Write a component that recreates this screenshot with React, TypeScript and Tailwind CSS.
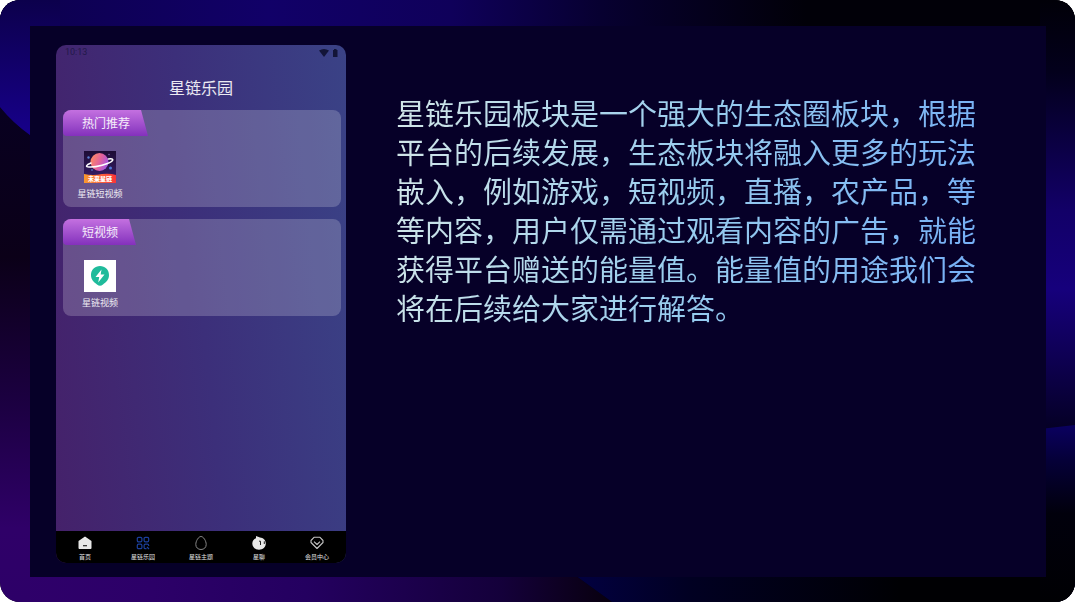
import React from 'react';

function Backdrop() {
  return (
    <svg
      className="absolute inset-0 w-full h-full"
      viewBox="0 0 1075 602"
      preserveAspectRatio="none"
      aria-hidden="true"
    >
      <defs>
        <linearGradient id="top" x1="0" y1="0" x2="1075" y2="0" gradientUnits="userSpaceOnUse">
          <stop offset="0" stopColor="#0c004c" />
          <stop offset="0.25" stopColor="#110068" />
          <stop offset="0.42" stopColor="#0f005a" />
          <stop offset="0.56" stopColor="#070030" />
          <stop offset="0.75" stopColor="#010008" />
          <stop offset="1" stopColor="#010008" />
        </linearGradient>
        <linearGradient id="topLeft" x1="0" y1="0" x2="0" y2="135" gradientUnits="userSpaceOnUse">
          <stop offset="0" stopColor="#17008a" stopOpacity="0" />
          <stop offset="1" stopColor="#17008a" />
        </linearGradient>
        <linearGradient id="left" x1="0" y1="110" x2="0" y2="602" gradientUnits="userSpaceOnUse">
          <stop offset="0" stopColor="#080020" />
          <stop offset="0.3" stopColor="#0b0018" />
          <stop offset="0.6" stopColor="#1c0042" />
          <stop offset="0.85" stopColor="#2f0068" />
          <stop offset="1" stopColor="#2d0068" />
        </linearGradient>
        <linearGradient id="bottom" x1="0" y1="0" x2="612" y2="0" gradientUnits="userSpaceOnUse">
          <stop offset="0" stopColor="#2f006a" />
          <stop offset="0.25" stopColor="#2c0068" />
          <stop offset="0.5" stopColor="#240060" />
          <stop offset="0.82" stopColor="#14003a" />
          <stop offset="1" stopColor="#08000e" />
        </linearGradient>
        <linearGradient id="bottomRight" x1="578" y1="0" x2="900" y2="0" gradientUnits="userSpaceOnUse">
          <stop offset="0" stopColor="#020040" />
          <stop offset="0.35" stopColor="#010022" />
          <stop offset="1" stopColor="#000003" />
        </linearGradient>
        <linearGradient id="right" x1="0" y1="0" x2="0" y2="602" gradientUnits="userSpaceOnUse">
          <stop offset="0" stopColor="#010008" />
          <stop offset="0.12" stopColor="#03001c" />
          <stop offset="0.35" stopColor="#120068" />
          <stop offset="0.48" stopColor="#16007c" />
          <stop offset="0.58" stopColor="#0f0058" />
          <stop offset="0.71" stopColor="#050026" />
          <stop offset="1" stopColor="#050026" />
        </linearGradient>
        <linearGradient id="rightLow" x1="0" y1="425" x2="0" y2="602" gradientUnits="userSpaceOnUse">
          <stop offset="0" stopColor="#0a0060" />
          <stop offset="0.2" stopColor="#050038" />
          <stop offset="0.5" stopColor="#01000c" />
          <stop offset="1" stopColor="#000003" />
        </linearGradient>
      </defs>
      <rect width="1075" height="602" fill="#000003" />
      <rect width="1075" height="60" fill="url(#top)" />
      <rect width="60" height="602" fill="url(#left)" />
      <path d="M0 0H60V160L30 135Q13 123 0 107Z" fill="#0c004c" />
      <path d="M0 0H60V160L30 135Q13 123 0 107Z" fill="url(#topLeft)" />
      <path d="M30 560H554L612 602H30Z" fill="url(#bottom)" />
      <path d="M554 560H1075V602H612Z" fill="url(#bottomRight)" />
      <rect x="1040" width="35" height="602" fill="url(#right)" />
      <path d="M1040 429L1075 425V602H1040Z" fill="url(#rightLow)" />
    </svg>
  );
}

function PlanetIcon() {
  return (
    <svg className="w-8 h-8" viewBox="0 0 32 32" aria-hidden="true">
      <defs>
        <linearGradient id="sky" x1="0" y1="0" x2="0" y2="1">
          <stop offset="0" stopColor="#1d0c34" />
          <stop offset="1" stopColor="#3c2272" />
        </linearGradient>
        <linearGradient id="planet" x1="0" y1="0.3" x2="1" y2="0.7">
          <stop offset="0" stopColor="#ff8b62" />
          <stop offset="0.5" stopColor="#e2619c" />
          <stop offset="1" stopColor="#9a55ec" />
        </linearGradient>
        <linearGradient id="ribbon" x1="0" y1="0" x2="1" y2="0">
          <stop offset="0" stopColor="#f99a2e" />
          <stop offset="0.6" stopColor="#fb5a3c" />
          <stop offset="1" stopColor="#fa3438" />
        </linearGradient>
      </defs>
      <rect width="32" height="32" fill="url(#sky)" />
      <circle cx="15.5" cy="11" r="9" fill="url(#planet)" />
      <path
        d="M7 12C2 14 1 16 5 16C11 16.5 26 13 28.5 9.5C29.5 8 27.500 7.500 24.500 8"
        fill="none"
        stroke="#fff"
        strokeWidth="1.5"
        strokeLinecap="round"
      />
      <circle cx="4.5" cy="6.5" r="1.2" fill="#5a7fd0" />
      <circle cx="26.5" cy="17" r="1.5" fill="#4f78d8" />
      <circle cx="8" cy="19" r="1" fill="#5060b0" />
      <circle cx="25" cy="3.5" r="0.7" fill="#8a6ac0" />
      <path d="M0 23Q9 25 18 23Q26 22 32 24V32H0Z" fill="url(#ribbon)" />
      <text
        x="16"
        y="30"
        textAnchor="middle"
        fontSize="6"
        fontWeight="900"
        fill="#fff"
        fontFamily="'Noto Sans CJK SC', sans-serif"
      >
        未来星链
      </text>
    </svg>
  );
}

function BoltIcon() {
  return (
    <svg className="w-8 h-8" viewBox="0 0 32 32" aria-hidden="true">
      <rect width="32" height="32" fill="#fff" />
      <path
        d="M16 6C21 6 25 9.5 25 15C25 20 22 22 19 24.5Q16 27 13 24.5C10 22 7 20 7 15C7 9.5 11 6 16 6Z"
        fill="#1fbb9b"
      />
      <path d="M17.5 9.5L11.5 17H15.2L14.2 22.5L20.5 14.5H16.7Z" fill="#fff" />
    </svg>
  );
}

const navItems = [
  {
    label: '首页',
    icon: <path d="M7 .5L13.500 5V12Q13.500 13 12.500 13H1.500Q.5 13 .5 12V5ZM5 9.200V10.200H9V9.200Z" fill="#e8e8e8" fillRule="evenodd" />,
  },
  {
    label: '星链乐园',
    icon: (
      <g fill="none" stroke="#1b3f9c" strokeWidth="1.2">
        <rect x="1.3" y="1.3" width="4.6" height="4.6" rx="1.3" />
        <rect x="8.1" y="1.3" width="4.6" height="4.6" rx="1.3" />
        <rect x="1.3" y="8.1" width="4.6" height="4.6" rx="1.3" />
        <path d="M10.500 12.700H9.400Q8.100 12.700 8.100 11.400V9.400Q8.100 8.100 9.400 8.100H11.400Q12.700 8.100 12.700 9.400V10M11 11L13 13" />
      </g>
    ),
  },
  {
    label: '星链主题',
    icon: (
      <path
        d="M7 .5C9.500 .5 12.200 5 12.200 8.500C12.200 11.500 10 13.500 7 13.500C4 13.500 1.800 11.500 1.800 8.500C1.800 5 4.500 .5 7 .5Z"
        fill="none"
        stroke="#888"
        strokeWidth="1"
      />
    ),
  },
  {
    label: '星聊',
    icon: (
      <>
        <path d="M4 0L8 1.500C11 1.700 13.800 4 13.800 7.500C13.800 11.200 10.800 13.700 7 13.700C3.200 13.700 .3 11 .3 7.500C.3 5 1.800 3 4 2.300Z" fill="#e8e8e8" />
        <path d="M7 5.200H8.500V9M12.300 5.300V8" fill="none" stroke="#222" strokeWidth="1" />
      </>
    ),
  },
  {
    label: '会员中心',
    icon: (
      <path
        d="M4 1.300H10L13 4.500V6.500L7 12.500L1 6.500V4.500ZM4 5.700L7 8.500L10 5.700"
        fill="none"
        stroke="#c4c4c4"
        strokeWidth="1.1"
        strokeLinejoin="round"
      />
    ),
  },
];

interface SectionProps {
  title: string;
  app: string;
  children: React.ReactNode;
}

function Section({ title, app, children }: SectionProps) {
  return (
    <section className="h-[97px] rounded-lg bg-white/20 overflow-hidden flex flex-col items-start">
      <h2 className="h-[26px] pl-[19px] pr-[18px] flex items-center text-xs text-white/90 bg-linear-to-b from-[#c470e0] to-[#8430bc] rounded-bl [clip-path:polygon(0_0,calc(100%_-_7px)_0,100%_100%,0_100%)]">
        {title}
      </h2>
      <button type="button" className="w-[74px] mt-[15px] flex flex-col items-center gap-1">
        {children}
        <span className="text-[9px] leading-[14px] text-white/90 whitespace-nowrap">{app}</span>
      </button>
    </section>
  );
}

function Phone() {
  return (
    <div className="w-[290px] h-[518px] shrink-0 rounded-[10px] overflow-hidden flex flex-col bg-[linear-gradient(84deg,#45216a,#3c2f7a_50%,#3a4286)]">
      <div className="h-4 pl-[9px] pr-[7px] flex items-center justify-between text-[9px] text-[#22194a] font-['Roboto',sans-serif]">
        <span>10:13</span>
        <svg className="w-5 h-2" viewBox="0 0 20 8" fill="#131538" aria-hidden="true">
          <path d="M0 1.500Q5 -1.500 10 1.500L5 8Z" />
          <path d="M14 1H15V0H17.500V1H18.500V8H14Z" />
        </svg>
      </div>
      <h1 className="h-[49px] pt-[15px] text-center text-base leading-[22px] text-white/90">星链乐园</h1>
      <div className="grow pl-[7px] pr-[5px] flex flex-col gap-3">
        <Section title="热门推荐" app="星链短视频">
          <PlanetIcon />
        </Section>
        <Section title="短视频" app="星链视频">
          <BoltIcon />
        </Section>
      </div>
      <nav className="h-8 grid grid-cols-5 bg-black">
        {navItems.map(item => (
          <a key={item.label} href="#" className="flex flex-col items-center pt-[5px] gap-px">
            <svg className="w-3.5 h-3.5" viewBox="0 0 14 14" aria-hidden="true">
              {item.icon}
            </svg>
            <span className="text-[6px] leading-3 text-[#e0e0e0] whitespace-nowrap">{item.label}</span>
          </a>
        ))}
      </nav>
    </div>
  );
}

export default function App() {
  return (
    <div
      lang="zh-CN"
      className="relative rounded-[20px] overflow-hidden pl-[30px] pr-[29px] pt-[26px] pb-[25px] font-['Noto_Sans_CJK_SC',sans-serif]"
    >
      <Backdrop />
      <main className="relative flex items-start gap-[50px] bg-[#060028] pl-[26px] pr-16 pt-[19px] pb-3.5">
        <Phone />
        <p className="mt-12 max-w-[584px] text-[29px] leading-[39px] text-transparent bg-clip-text bg-[linear-gradient(100deg,#d2e6e8,#98ccee_50%,#74aef6)]">
          星链乐园板块是一个强大的生态圈板块，根据平台的后续发展，生态板块将融入更多的玩法嵌入，例如游戏，短视频，直播，农产品，等等内容，用户仅需通过观看内容的广告，就能获得平台赠送的能量值。能量值的用途我们会将在后续给大家进行解答。
        </p>
      </main>
    </div>
  );
}
